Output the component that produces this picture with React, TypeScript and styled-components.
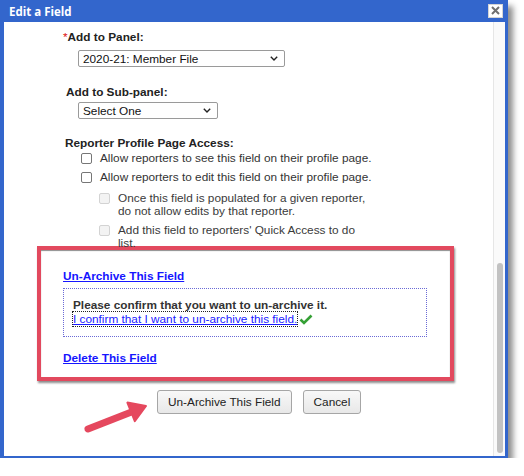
import React from "react";
import styled, {createGlobalStyle} from "styled-components";

const GlobalStyle = createGlobalStyle`
  html, body {
    margin: 0;
    padding: 0;
    background: #ffffff;
  }
  body {
    font-family: "Liberation Sans", Arial, sans-serif;
    font-size: 11.8px;
    color: #222222;
  }
`;

const Dialog = styled.div`
  display: flex;
  flex-direction: column;
  box-sizing: border-box;
  width: 508px;
  height: 458px;
  padding: 0 3px 2px 4px;
  background: #3366cc;
  box-shadow: 5px 6px 6px rgba(0, 0, 0, 0.45);
`;

const TitleBar = styled.div`
  display: flex;
  align-items: center;
  justify-content: space-between;
  height: 22px;
  padding: 0 2px 0 5px;
  color: #ffffff;
  font-family: "Open Sans", "DejaVu Sans", sans-serif;
  font-weight: 700;
  font-size: 11.5px;
`;

const CloseButton = styled.div`
  display: flex;
  align-items: center;
  justify-content: center;
  width: 15px;
  height: 14px;
  margin-top: -1px;
  background: #ffffff;
  border: 1px solid #d5d5d5;
  box-sizing: border-box;
`;

const Body = styled.div`
  position: relative;
  flex: 1;
  display: flex;
  background: #ffffff;
  overflow: hidden;
`;

const Content = styled.div`
  flex: 1;
  padding: 8px 0 0 33px;
`;

const ScrollTrack = styled.div`
  display: flex;
  justify-content: center;
  box-sizing: border-box;
  width: 12px;
  padding-top: 241px;
  border-left: 1px solid #e6e6e6;
  background: #fafafa;
`;

const ScrollThumb = styled.div`
  width: 6px;
  height: 190px;
  border-radius: 3px;
  background: #c2c2c2;
`;

const Form = styled.div`
  padding-left: 26px;
`;

const FieldLabel = styled.div<{ $offset?: number; $top?: number }>`
  margin-left: ${p => p.$offset ?? 0}px;
  margin-top: ${p => p.$top ?? 0}px;
  font-weight: 700;
  line-height: 14px;
  color: #222222;
`;

const Required = styled.span`
  color: #dd1111;
  font-weight: 400;
`;

const SelectWrap = styled.div<{ $width: number; $top: number }>`
  position: relative;
  width: ${p => p.$width}px;
  margin: ${p => p.$top}px 0 0 15px;
`;

const Select = styled.select`
  appearance: none;
  display: block;
  box-sizing: border-box;
  width: 100%;
  height: 17px;
  padding: 0 0 0 4px;
  border: 1px solid #9a9a9a;
  border-radius: 2px;
  background: #ffffff;
  color: #111111;
  font-family: "Liberation Sans", Arial, sans-serif;
  font-size: 11.8px;
`;

const Chevron = styled.svg`
  position: absolute;
  right: 7px;
  top: 6px;
  pointer-events: none;
`;

const CheckRow = styled.label<{ $level: number; $top: number }>`
  display: flex;
  align-items: flex-start;
  gap: 8px;
  margin: ${p => p.$top}px 0 0 ${p => (p.$level ? 36 : 18)}px;
  color: ${p => (p.$level ? "#3a3a3a" : "#333333")};
  line-height: 13px;
`;

const Box = styled.span<{ $disabled?: boolean }>`
  flex: none;
  box-sizing: border-box;
  width: 11px;
  height: 11px;
  margin-top: 1px;
  border: 1px solid ${p => (p.$disabled ? "#d3d3d3" : "#767676")};
  border-radius: 2px;
  background: ${p => (p.$disabled ? "#f3f3f3" : "#ffffff")};
`;

const CalloutBox = styled.div`
  box-sizing: border-box;
  width: 417px;
  margin-top: -4px;
  padding: 19px 0 12px 22px;
  border: 4px solid #e2495e;
  background: #ffffff;
  box-shadow: 1px 2px 2px rgba(0, 0, 0, 0.45), inset 0 1px 1px rgba(0, 0, 0, 0.45);
`;

const ActionLink = styled.a`
  display: inline-block;
  font-weight: 700;
  line-height: 14px;
  color: #1515ff;
  text-decoration: underline;
`;

const ConfirmBox = styled.div`
  box-sizing: border-box;
  width: 364px;
  margin: 5px 0 14px;
  padding: 9px 0 10px 9px;
  border: 1px dotted #6a6ad6;
  line-height: 14px;
`;

const ConfirmText = styled.div`
  font-weight: 700;
  color: #333333;
`;

const ConfirmLine = styled.div`
  display: flex;
  align-items: center;
  gap: 2px;
`;

const ConfirmLink = styled.a`
  color: #1a1aff;
  text-decoration: underline;
  outline: 1px dotted #222222;
  outline-offset: 0;
`;

const ButtonRow = styled.div`
  display: flex;
  gap: 11px;
  margin: 9px 0 0 120px;
`;

const Button = styled.button`
  height: 24px;
  padding: 0 10px;
  border: 1px solid #a6a6a6;
  border-radius: 3px;
  background: linear-gradient(#f8f8f8, #e8e8e8);
  color: #222222;
  font-family: "Liberation Sans", Arial, sans-serif;
  font-size: 11.8px;
`;

const Arrow = styled.svg`
  position: absolute;
  left: 76px;
  top: 370px;
`;

const App = () => (
  <>
    <GlobalStyle/>
    <Dialog>
      <TitleBar>
        <span>Edit a Field</span>
        <CloseButton>
          <svg width="9" height="9" viewBox="0 0 9 9">
            <path d="M1 1L8 8M8 1L1 8" stroke="#707070" strokeWidth="2"/>
          </svg>
        </CloseButton>
      </TitleBar>
      <Body>
        <Content>
          <Form>
            <FieldLabel><Required>*</Required>Add to Panel:</FieldLabel>
            <SelectWrap $width={207} $top={6}>
              <Select defaultValue="member">
                <option value="member">2020-21: Member File</option>
              </Select>
              <Chevron width="8" height="5" viewBox="0 0 8 5">
                <path d="M0.8 0.8L4 4L7.2 0.8" fill="none" stroke="#222" strokeWidth="1.4"/>
              </Chevron>
            </SelectWrap>

            <FieldLabel $offset={3} $top={18}>Add to Sub-panel:</FieldLabel>
            <SelectWrap $width={140} $top={3}>
              <Select defaultValue="none">
                <option value="none">Select One</option>
              </Select>
              <Chevron width="8" height="5" viewBox="0 0 8 5">
                <path d="M0.8 0.8L4 4L7.2 0.8" fill="none" stroke="#222" strokeWidth="1.4"/>
              </Chevron>
            </SelectWrap>

            <FieldLabel $offset={2} $top={17}>Reporter Profile Page Access:</FieldLabel>
            <CheckRow $level={0} $top={2}>
              <Box/>
              <span>Allow reporters to see this field on their profile page.</span>
            </CheckRow>
            <CheckRow $level={0} $top={6}>
              <Box/>
              <span>Allow reporters to edit this field on their profile page.</span>
            </CheckRow>
            <CheckRow $level={1} $top={8}>
              <Box $disabled/>
              <span>Once this field is populated for a given reporter,<br/>do not allow edits by that reporter.</span>
            </CheckRow>
            <CheckRow $level={1} $top={6}>
              <Box $disabled/>
              <span>Add this field to reporters' Quick Access to do<br/>list.</span>
            </CheckRow>
          </Form>

          <CalloutBox>
            <ActionLink>Un-Archive This Field</ActionLink>
            <ConfirmBox>
              <ConfirmText>Please confirm that you want to un-archive it.</ConfirmText>
              <ConfirmLine>
                <ConfirmLink>I confirm that I want to un-archive this field.</ConfirmLink>
                <svg width="14" height="11" viewBox="0 0 14 11">
                  <path d="M1.5 5.5L5 9L12.5 1.5" fill="none" stroke="#35a035" strokeWidth="2.6"/>
                </svg>
              </ConfirmLine>
            </ConfirmBox>
            <ActionLink>Delete This Field</ActionLink>
          </CalloutBox>

          <ButtonRow>
            <Button>Un-Archive This Field</Button>
            <Button>Cancel</Button>
          </ButtonRow>
        </Content>
        <ScrollTrack>
          <ScrollThumb/>
        </ScrollTrack>
        <Arrow width="72" height="48" viewBox="0 0 72 48">
          <line x1="8" y1="37" x2="54" y2="19" stroke="#e5485e" strokeWidth="7" strokeLinecap="round"/>
          <path d="M66 14L54.8 29.2L47.4 10.6Z" fill="#e5485e" stroke="#e5485e" strokeWidth="2" strokeLinejoin="round"/>
        </Arrow>
      </Body>
    </Dialog>
  </>
);

export default App;
